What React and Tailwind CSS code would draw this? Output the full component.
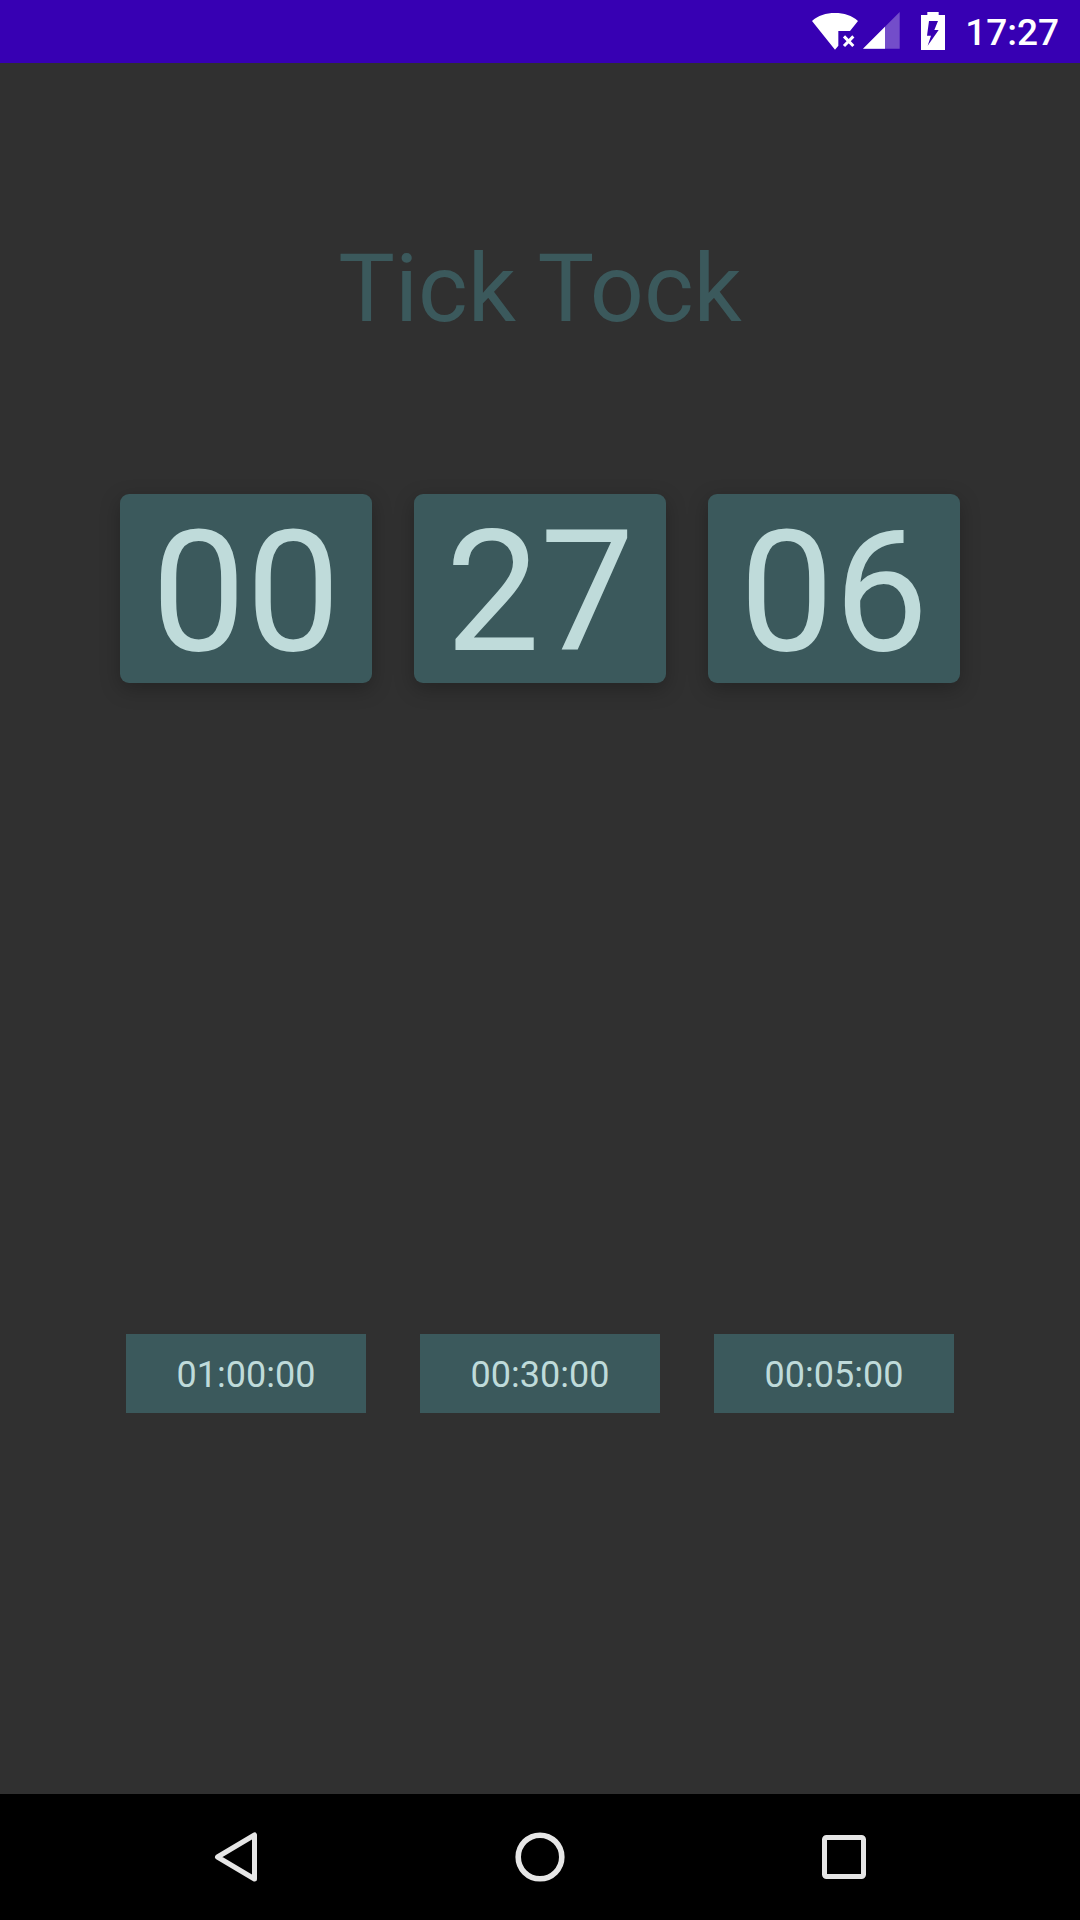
import React from "react";

const remaining = [
  { unit: "Hours", value: "00" },
  { unit: "Minutes", value: "27" },
  { unit: "Seconds", value: "06" },
];

const presets = ["01:00:00", "00:30:00", "00:05:00"];

function WifiOffIcon() {
  return (
    <svg className="h-[38px] w-[46px]" viewBox="0 0 138 114" aria-hidden="true">
      <path
        d="M0 27C18 11 42 3 69 3s51 8 69 24l-24 30H79v44l-10 12Z"
        fill="#fff"
      />
      <path d="M96 73l28 29M124 73l-28 29" stroke="#fff" strokeWidth="9" />
    </svg>
  );
}

function SignalIcon() {
  return (
    <svg className="h-[37px] w-[37px]" viewBox="0 0 111 111" aria-hidden="true">
      <path d="M110 0v110H0Z" fill="#fff" fillOpacity="0.3" />
      <path d="M66 44v66H0Z" fill="#fff" />
    </svg>
  );
}

function BatteryIcon() {
  return (
    <svg className="h-[38px] w-6" viewBox="0 0 72 114" aria-hidden="true">
      <path
        fillRule="evenodd"
        fill="#fff"
        d="M19 0h34v9h19v105H0V9h19ZM24 27l-6 44h12l-10 30 33-47H40l11-27Z"
      />
    </svg>
  );
}

function StatusBar() {
  return (
    <header className="flex h-[63px] items-center justify-end bg-[#3700b3] pr-[21px] pb-0.5 text-white">
      <div className="flex items-center gap-[5px]">
        <WifiOffIcon />
        <SignalIcon />
      </div>
      <div className="ml-[21px] flex items-center gap-5">
        <BatteryIcon />
        <time className="pt-1 text-[37px] leading-[44px] font-medium">17:27</time>
      </div>
    </header>
  );
}

function NavBar() {
  return (
    <nav className="flex h-[126px] items-center justify-center gap-60 bg-black">
      <button type="button" aria-label="Back">
        <svg className="size-16" viewBox="0 0 64 64" fill="none">
          <path
            d="M50.5 10v44L13.5 32Z"
            stroke="#e6e6e6"
            strokeWidth="5"
            strokeLinejoin="round"
          />
        </svg>
      </button>
      <button type="button" aria-label="Home">
        <svg className="size-16" viewBox="0 0 64 64" fill="none">
          <circle cx="32" cy="32" r="21.8" stroke="#e6e6e6" strokeWidth="5.6" />
        </svg>
      </button>
      <button type="button" aria-label="Recent apps">
        <svg className="size-16" viewBox="0 0 64 64" fill="none">
          <rect x="12.5" y="12.5" width="39" height="39" rx="2" stroke="#e6e6e6" strokeWidth="5" />
        </svg>
      </button>
    </nav>
  );
}

export default function App() {
  return (
    <div className="flex min-h-screen flex-col bg-[#303030] font-['Roboto',sans-serif]">
      <StatusBar />
      <main className="flex grow flex-col px-[120px] pt-[170px]">
        <h1 className="text-center text-[95px] leading-[112px] text-[#3b595c]">Tick Tock</h1>
        <section aria-label="Time left" className="mt-[149px] grid grid-cols-3 gap-[42px]">
          {remaining.map(({ unit, value }) => (
            <div
              key={unit}
              aria-label={unit}
              className="rounded-[9px] bg-[#3b595c] pt-2 text-center text-[168px] leading-[181px] text-[#bfdbda] shadow-[0_6px_20px_rgba(0,0,0,0.25)]"
            >
              {value}
            </div>
          ))}
        </section>
        <div className="grow-29" />
        <section aria-label="Presets" className="grid grid-cols-3 gap-[54px] px-[6px]">
          {presets.map((preset) => (
            <button
              key={preset}
              type="button"
              className="h-[79px] bg-[#3b595c] pt-1 text-[36px] leading-[44px] text-[#bfdbda]"
            >
              {preset}
            </button>
          ))}
        </section>
        <div className="grow-17" />
      </main>
      <NavBar />
    </div>
  );
}
